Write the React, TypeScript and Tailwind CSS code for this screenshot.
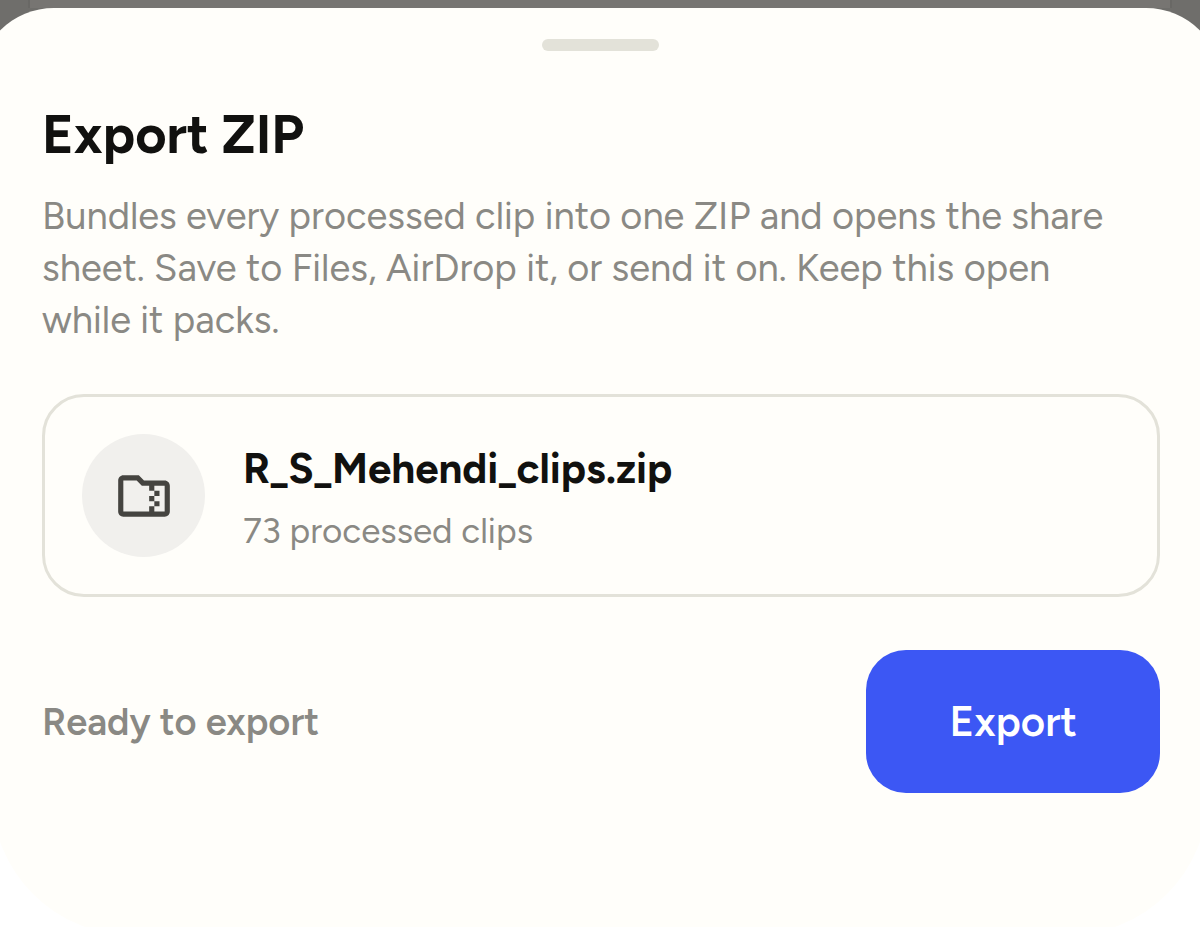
import { MdOutlineFolderZip } from "react-icons/md";

const archive = {
  name: "R_S_Mehendi_clips.zip",
  clips: 73,
};

export default function App() {
  return (
    <main className="h-screen overflow-hidden bg-white font-['Figtree','Lato',sans-serif]">
      <section
        aria-labelledby="export-title"
        className="-mx-2 min-h-[calc(100vh+8px)] overflow-hidden rounded-b-[140px] bg-[#fffefa]"
      >
        {/* dimmed page behind the sheet */}
        <div className="bg-[#6f6e6b]">
          <div className="mx-9 h-2 border-x-2 border-[#696865] bg-[#777572]" />
          <div className="-mx-3.5 flex justify-center rounded-t-[76px] bg-[#fffefa] pt-[31px] pb-[49px]">
            <div className="h-3 w-[117px] rounded-full bg-[#e3e2d9]" />
          </div>
        </div>

        <div className="pr-12 pl-[50px]">
          <h1 id="export-title" className="text-[54px] leading-[70px] font-bold text-[#11110f]">
            Export ZIP
          </h1>
          <p className="mt-5 pr-8 text-[38px] leading-[52px] text-[#8a8984]">
            Bundles every processed clip into one ZIP and opens the share sheet. Save to Files, AirDrop it, or send it on. Keep this open while it packs.
          </p>

          <div className="mt-12 flex items-center gap-[38px] rounded-[42px] border-3 border-[#e3e2d9] p-[37px]">
            <div className="flex size-[123px] shrink-0 items-center justify-center rounded-full bg-[#f1f0ed]">
              <MdOutlineFolderZip size={62} className="text-[#454440]" />
            </div>
            <div>
              <h2 className="text-[42px] leading-[56px] font-bold text-[#11110f]">{archive.name}</h2>
              <p className="mt-3.5 text-[35px] leading-10 text-[#8a8984]">{archive.clips} processed clips</p>
            </div>
          </div>

          <div className="mt-[53px] flex items-center justify-between">
            <p role="status" className="text-[38px] leading-[52px] font-semibold text-[#8a8984]">
              Ready to export
            </p>
            <button
              type="button"
              className="rounded-[40px] bg-[#3c57f4] px-[83px] py-11 text-[42px] leading-[55px] font-semibold text-white"
            >
              Export
            </button>
          </div>
        </div>
      </section>
    </main>
  );
}
